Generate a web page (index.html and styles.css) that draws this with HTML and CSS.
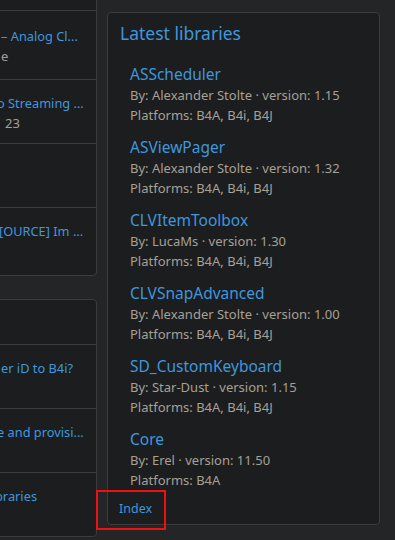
FILE: index.html
```html
<!DOCTYPE html>
<html lang="en">

<head>
    <meta charset="UTF-8">
    <meta name="viewport" content="width=device-width, initial-scale=1.0">
    <title>B4X Forum</title>
    <link rel="stylesheet" href="styles.css">
</head>

<body>

    <div class="side">

        <div class="block block-top">
            <div class="row row-first">
                <a class="row-title" href="#">– Analog Cl...</a>
                <div class="row-meta">e</div>
            </div>
            <div class="row">
                <a class="row-title shift-4" href="#">o Streaming ...</a>
                <div class="row-meta pad-4">23</div>
            </div>
            <div class="row">
                <a class="row-title" href="#"></a>
                <div class="row-meta"></div>
            </div>
            <div class="row row-last">
                <a class="row-title shift-1" href="#">[OURCE] Im ...</a>
            </div>
        </div>

        <div class="block">
            <div class="block-head"></div>
            <div class="row">
                <a class="row-title" href="#">er iD to B4i?</a>
            </div>
            <div class="row">
                <a class="row-title shift-4" href="#">e and provisi...</a>
            </div>
            <div class="row">
                <a class="row-title shift-5" href="#">braries</a>
            </div>
        </div>

    </div>

    <div class="main">
        <div class="libs">
            <h3 class="libs-header">Latest libraries</h3>

            <ul class="lib-list">
                <li>
                    <a href="#">ASScheduler</a>
                    <div>By: Alexander Stolte · version: 1.15</div>
                    <div>Platforms: B4A, B4i, B4J</div>
                </li>
                <li>
                    <a href="#">ASViewPager</a>
                    <div>By: Alexander Stolte · version: 1.32</div>
                    <div>Platforms: B4A, B4i, B4J</div>
                </li>
                <li>
                    <a href="#">CLVItemToolbox</a>
                    <div>By: LucaMs · version: 1.30</div>
                    <div>Platforms: B4A, B4i, B4J</div>
                </li>
                <li>
                    <a href="#">CLVSnapAdvanced</a>
                    <div>By: Alexander Stolte · version: 1.00</div>
                    <div>Platforms: B4A, B4i, B4J</div>
                </li>
                <li>
                    <a href="#">SD_CustomKeyboard</a>
                    <div>By: Star-Dust · version: 1.15</div>
                    <div>Platforms: B4A, B4i, B4J</div>
                </li>
                <li>
                    <a href="#">Core</a>
                    <div>By: Erel · version: 11.50</div>
                    <div>Platforms: B4A</div>
                </li>
            </ul>

            <div class="libs-foot">
                <a href="#">Index</a>
                <div class="highlight"></div>
            </div>
        </div>
    </div>

</body>

</html>
```

FILE: styles.css
```css
body {
    background: #232527;
    margin: 0px;
    display: flex;
    align-items: flex-start;
    overflow: hidden;
    height: 540px;
    font-family: "Noto Sans", "Open Sans", sans-serif;
}

a {
    color: #3f97dc;
    text-decoration: none;
}

.side {
    width: 301px;
    margin-left: -204px;
    margin-top: -60px;
    display: flex;
    flex-direction: column;
    gap: 23px;
    flex-shrink: 0;
}

.block {
    background: #1c1d1f;
    border: 1px solid #3a3c3e;
    border-radius: 4px;
}

.block-top {
    padding-top: 69px;
}

.block-head {
    height: 44px;
}

.row {
    height: 63px;
    border-top: 1px solid #3a3c3e;
    padding-left: 204px;
    overflow: hidden;
}

.row-first {
    height: 68px;
}

.row-first .row-title {
    margin-top: 15px;
}

.row-last {
    height: 67px;
}

.row-title {
    display: block;
    white-space: nowrap;
    font-size: 12.8px;
    line-height: 20px;
    margin-top: 13px;
}

.row-meta {
    font-size: 13px;
    line-height: 20px;
    color: #a6a095;
}

.shift-1 { margin-left: -2px; }
.shift-4 { margin-left: -4px; }
.shift-5 { margin-left: -6px; }
.pad-4 { padding-left: 4px; }

.main {
    margin-left: 10px;
    margin-top: 12px;
    width: 273px;
    flex-shrink: 0;
}

.libs {
    background: #1c1d1f;
    border: 1px solid #3a3c3e;
    border-radius: 4px;
    height: 513px;
    box-sizing: border-box;
    display: flex;
    flex-direction: column;
}

.libs-header {
    margin: 0px;
    padding: 8px 12px 0px 12px;
    font-size: 17.5px;
    font-weight: normal;
    line-height: 24px;
    color: #3f97dc;
}

.lib-list {
    list-style: none;
    margin: 18px 0px 0px 0px;
    padding: 0px 10px 0px 22px;
    display: flex;
    flex-direction: column;
    gap: 11px;
}

.lib-list a {
    display: block;
    font-size: 15.5px;
    line-height: 22px;
}

.lib-list div {
    font-size: 13px;
    line-height: 20px;
    color: #a6a095;
}

.libs-foot {
    position: relative;
    margin-top: auto;
    padding: 0px 0px 5px 11px;
    font-size: 12.5px;
    line-height: 20px;
}

.highlight {
    position: absolute;
    left: -12px;
    top: -9px;
    width: 70px;
    height: 40px;
    box-sizing: border-box;
    border: 2px solid #f01010;
}
```
